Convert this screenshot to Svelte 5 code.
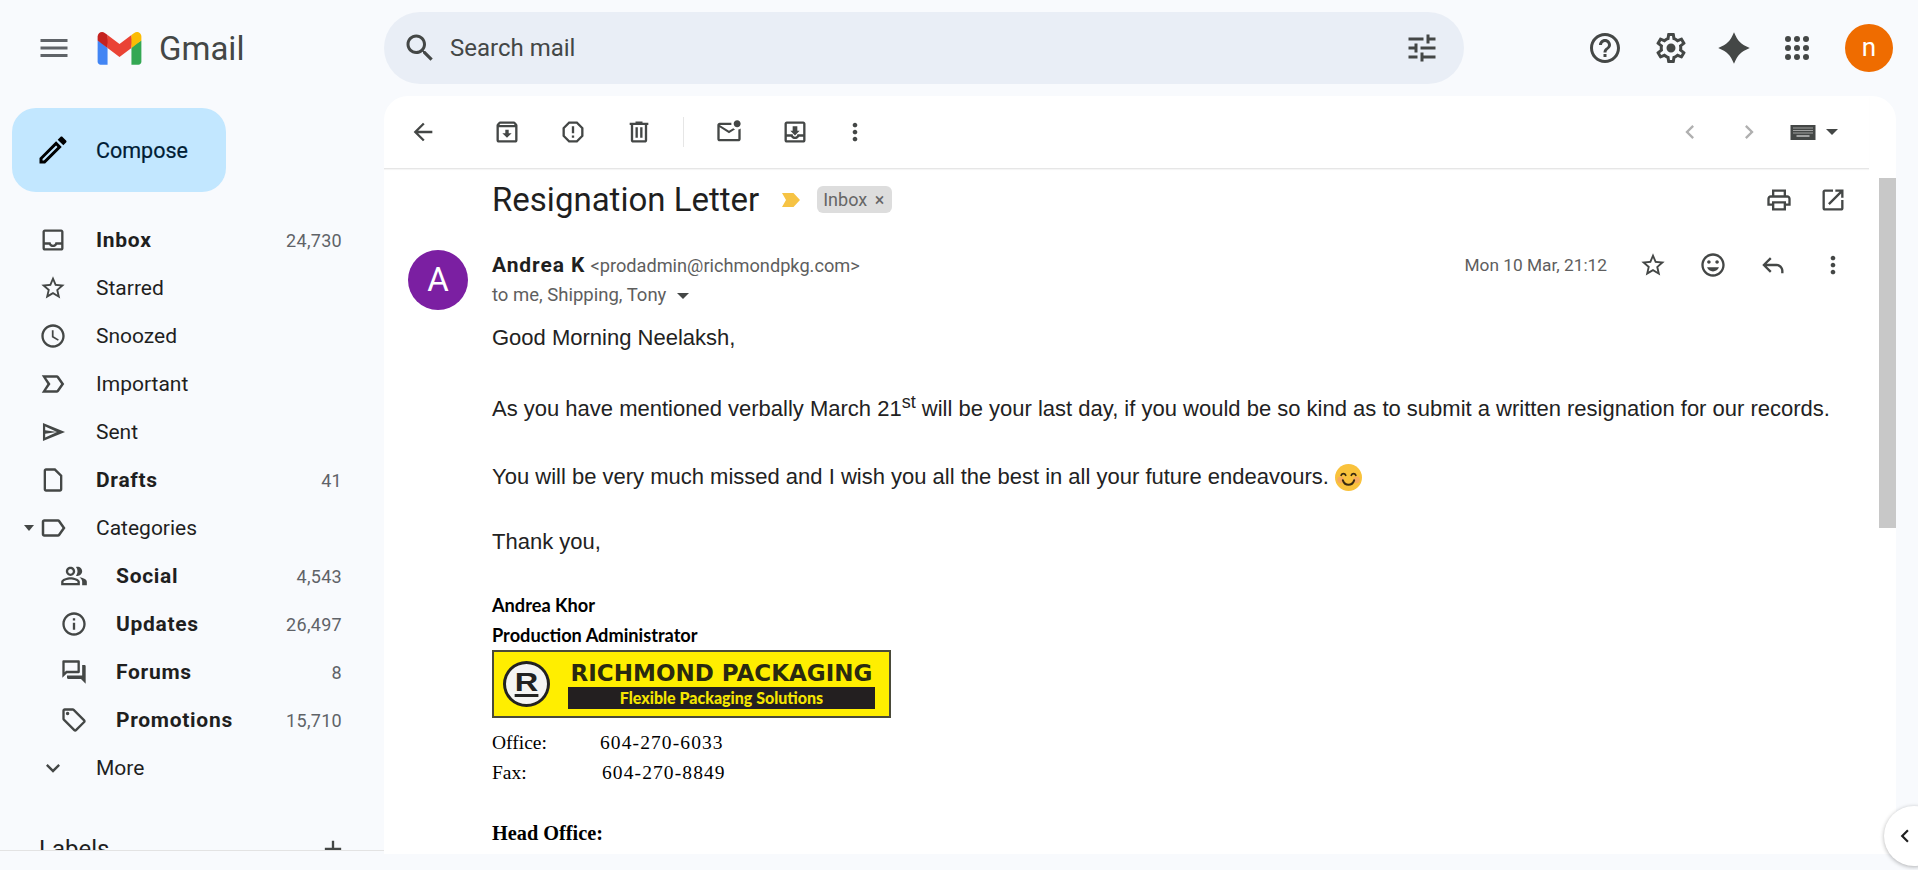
<script>
	const p = {
		menu: 'M3 18h18v-2H3v2zm0-5h18v-2H3v2zm0-7v2h18V6H3z',
		search: 'M15.5 14h-.79l-.28-.27C15.41 12.59 16 11.11 16 9.5 16 5.91 13.09 3 9.5 3S3 5.91 3 9.5 5.91 16 9.5 16c1.61 0 3.09-.59 4.23-1.57l.27.28v.79l5 4.99L20.49 19l-4.99-5zm-6 0C7.01 14 5 11.99 5 9.5S7.01 5 9.5 5 14 7.01 14 9.5 11.99 14 9.5 14z',
		tune: 'M3 17v2h6v-2H3zM3 5v2h10V5H3zm10 16v-2h8v-2h-8v-2h-2v6h2zM7 9v2H3v2h4v2h2V9H7zm14 4v-2H11v2h10zm-6-4h2V7h4V5h-4V3h-2v6z',
		help: 'M11 18h2v-2h-2v2zm1-16C6.48 2 2 6.48 2 12s4.48 10 10 10 10-4.48 10-10S17.52 2 12 2zm0 18c-4.41 0-8-3.59-8-8s3.59-8 8-8 8 3.59 8 8-3.59 8-8 8zm0-14c-2.21 0-4 1.79-4 4h2c0-1.1.9-2 2-2s2 .9 2 2c0 2-3 1.75-3 5h2c0-2.25 3-2.5 3-5 0-2.21-1.79-4-4-4z',
		gear: 'M19.43 12.98c.04-.32.07-.64.07-.98 0-.34-.03-.66-.07-.98l2.11-1.65c.19-.15.24-.42.12-.64l-2-3.46c-.09-.16-.26-.25-.44-.25-.06 0-.12.01-.17.03l-2.49 1c-.52-.4-1.08-.73-1.69-.98l-.38-2.65C14.46 2.18 14.25 2 14 2h-4c-.25 0-.46.18-.49.42l-.38 2.65c-.61.25-1.17.59-1.69.98l-2.49-1c-.06-.02-.12-.03-.18-.03-.17 0-.34.09-.43.25l-2 3.46c-.13.22-.07.49.12.64l2.11 1.65c-.04.32-.07.65-.07.98 0 .33.03.66.07.98l-2.11 1.65c-.19.15-.24.42-.12.64l2 3.46c.09.16.26.25.44.25.06 0 .12-.01.17-.03l2.49-1c.52.4 1.08.73 1.69.98l.38 2.65c.03.24.24.42.49.42h4c.25 0 .46-.18.49-.42l.38-2.65c.61-.25 1.17-.59 1.69-.98l2.49 1c.06.02.12.03.18.03.17 0 .34-.09.43-.25l2-3.46c.12-.22.07-.49-.12-.64l-2.11-1.65zm-1.98-1.71c.04.31.05.52.05.73 0 .21-.02.43-.05.73l-.14 1.13.89.7 1.08.84-.7 1.21-1.27-.51-1.04-.42-.9.68c-.43.32-.84.56-1.25.73l-1.06.43-.16 1.13-.2 1.35h-1.4l-.19-1.35-.16-1.13-1.06-.43c-.43-.18-.83-.41-1.23-.71l-.91-.7-1.06.43-1.27.51-.7-1.21 1.08-.84.89-.7-.14-1.13c-.03-.31-.05-.54-.05-.74s.02-.43.05-.73l.14-1.13-.89-.7-1.08-.84.7-1.21 1.27.51 1.04.42.9-.68c.43-.32.84-.56 1.25-.73l1.06-.43.16-1.13.2-1.35h1.39l.19 1.35.16 1.13 1.06.43c.43.18.83.41 1.23.71l.91.7 1.06-.43 1.27-.51.7 1.21-1.07.85-.89.7.14 1.13zM12 9a3 3 0 1 0 0 6 3 3 0 0 0 0-6z',
		spark: 'M12 1.5C14.5 7.5 16.5 9.5 22.5 12 16.5 14.5 14.5 16.5 12 22.5 9.5 16.5 7.5 14.5 1.5 12 7.5 9.5 9.5 7.5 12 1.5z',
		grid: 'M6 8a2 2 0 1 0 0-4 2 2 0 0 0 0 4zm6 0a2 2 0 1 0 0-4 2 2 0 0 0 0 4zm6 0a2 2 0 1 0 0-4 2 2 0 0 0 0 4zM6 14a2 2 0 1 0 0-4 2 2 0 0 0 0 4zm6 0a2 2 0 1 0 0-4 2 2 0 0 0 0 4zm6 0a2 2 0 1 0 0-4 2 2 0 0 0 0 4zM6 20a2 2 0 1 0 0-4 2 2 0 0 0 0 4zm6 0a2 2 0 1 0 0-4 2 2 0 0 0 0 4zm6 0a2 2 0 1 0 0-4 2 2 0 0 0 0 4z',
		pencil: 'M3 17.25V21h3.75L17.81 9.94l-3.75-3.75L3 17.25zM5.92 19H5v-.92l9.06-9.06.92.92L5.92 19zM20.71 5.63l-2.34-2.34c-.2-.2-.45-.29-.71-.29s-.51.1-.7.29l-1.83 1.83 3.75 3.75 1.83-1.83c.39-.39.39-1.02 0-1.41z',
		inbox: 'M19 3H5c-1.1 0-2 .9-2 2v14c0 1.1.9 2 2 2h14c1.1 0 2-.9 2-2V5c0-1.1-.9-2-2-2zm0 16H5v-3h3.56c.69 1.19 1.97 2 3.45 2s2.75-.81 3.45-2H19v3zm0-5h-4.99c0 1.1-.9 2-2 2s-2-.9-2-2H5V5h14v9z',
		star: 'M22 9.24l-7.19-.62L12 2 9.19 8.63 2 9.24l5.46 4.73L5.82 21 12 17.27 18.18 21l-1.63-7.03L22 9.24zM12 15.4l-3.76 2.27 1-4.28-3.32-2.88 4.38-.38L12 6.1l1.71 4.04 4.38.38-3.32 2.88 1 4.28L12 15.4z',
		clock: 'M11.99 2C6.47 2 2 6.48 2 12s4.47 10 9.99 10C17.52 22 22 17.52 22 12S17.52 2 11.99 2zM12 20c-4.42 0-8-3.58-8-8s3.58-8 8-8 8 3.58 8 8-3.58 8-8 8zm.5-13H11v6l5.25 3.15.75-1.23-4.5-2.67z',
		important: 'M15 19H3l4.5-7L3 5h12c.65 0 1.26.31 1.63.84L21 12l-4.37 6.16c-.37.52-.98.84-1.63.84zm-8.5-2H15l3.5-5L15 7H6.5l3.5 5-3.5 5z',
		sent: 'M3.4 4.3 22.3 12 3.4 19.7zM5.3 7.2v3.3L15.5 12zM5.3 13.5v3.3L15.5 12z',
		draft: 'M14 2H6c-1.1 0-2 .9-2 2v16c0 1.1.9 2 2 2h12c1.1 0 2-.9 2-2V8l-6-6zm4 18H6V4h7.17L18 8.83V20z',
		label: 'M17.63 5.84C17.27 5.33 16.67 5 16 5L5 5.01C3.9 5.01 3 5.9 3 7v10c0 1.1.9 1.99 2 1.99L16 19c.67 0 1.27-.33 1.63-.84L22 12l-4.37-6.16zM16 17H5V7h11l3.55 5L16 17z',
		group: 'M16.67 13.13C18.04 14.06 19 15.32 19 17v3h4v-3c0-2.18-3.57-3.47-6.33-3.87zM9 12c2.21 0 4-1.79 4-4s-1.79-4-4-4-4 1.79-4 4 1.79 4 4 4zm0-6c1.1 0 2 .9 2 2s-.9 2-2 2-2-.9-2-2 .9-2 2-2zm6 6c2.21 0 4-1.79 4-4s-1.79-4-4-4c-.47 0-.91.1-1.33.24C14.5 5.27 15 6.58 15 8s-.5 2.73-1.33 3.76c.42.14.86.24 1.33.24zM9 13c-2.67 0-8 1.34-8 4v3h16v-3c0-2.66-5.33-4-8-4zm6 5H3v-.99C3.2 16.29 6.3 15 9 15s5.8 1.29 6 2v1z',
		info: 'M11 7h2v2h-2zm0 4h2v6h-2zm1-9C6.48 2 2 6.48 2 12s4.48 10 10 10 10-4.48 10-10S17.52 2 12 2zm0 18c-4.41 0-8-3.59-8-8s3.59-8 8-8 8 3.59 8 8-3.59 8-8 8z',
		forum: 'M15 4v7H5.17L4 12.17V4h11m1-2H3c-.55 0-1 .45-1 1v14l4-4h10c.55 0 1-.45 1-1V3c0-.55-.45-1-1-1zm5 4h-2v9H6v2c0 .55.45 1 1 1h11l4 4V7c0-.55-.45-1-1-1z',
		tag: 'M21.41 11.58l-9-9C12.05 2.22 11.55 2 11 2H4c-1.1 0-2 .9-2 2v7c0 .55.22 1.05.59 1.42l9 9c.36.36.86.58 1.41.58s1.05-.22 1.41-.59l7-7c.37-.36.59-.86.59-1.41s-.23-1.06-.59-1.42zM13 20.01L4 11V4h7v-.01l9 9-7 7.02zM6.5 5a1.5 1.5 0 1 0 0 3 1.5 1.5 0 0 0 0-3z',
		more: 'M16.59 8.59L12 13.17 7.41 8.59 6 10l6 6 6-6z',
		plus: 'M19 13h-6v6h-2v-6H5v-2h6V5h2v6h6v2z',
		back: 'M20 11H7.83l5.59-5.59L12 4l-8 8 8 8 1.41-1.41L7.83 13H20v-2z',
		archive: 'M20.54 5.23l-1.39-1.68C18.88 3.21 18.47 3 18 3H6c-.47 0-.88.21-1.16.55L3.46 5.23C3.17 5.57 3 6.02 3 6.5V19c0 1.1.9 2 2 2h14c1.1 0 2-.9 2-2V6.5c0-.48-.17-.93-.46-1.27zM6.24 5h11.52l.81.97H5.44l.8-.97zM5 19V8h14v11H5zm8.45-9h-2.9v3H8l4 4 4-4h-2.55z',
		spam: 'M15.73 3H8.27L3 8.27v7.46L8.27 21h7.46L21 15.73V8.27L15.73 3zM19 14.9L14.9 19H9.1L5 14.9V9.1L9.1 5h5.8L19 9.1v5.8zM11 7h2v6h-2zm0 8h2v2h-2z',
		trash: 'M15 4V3H9v1H4v2h1v13c0 1.1.9 2 2 2h10c1.1 0 2-.9 2-2V6h1V4h-5zm2 15H7V6h10v13zM9 8h2v9H9zm4 0h2v9h-2z',
		unread: 'M22 8.98V18c0 1.1-.9 2-2 2H4c-1.1 0-2-.9-2-2V6c0-1.1.9-2 2-2h10.1c-.06.32-.1.66-.1 1 0 .34.04.68.1 1H4l8 5 3.67-2.29c.47.43 1.02.76 1.63.98L12 13 4 8v10h16V9.9c.74-.15 1.42-.48 2-.92zM16 5c0 1.66 1.34 3 3 3s3-1.34 3-3-1.34-3-3-3-3 1.34-3 3z',
		move: 'M19 3H4.99c-1.11 0-1.98.9-1.98 2L3 19c0 1.1.88 2 1.99 2H19c1.1 0 2-.9 2-2V5c0-1.1-.9-2-2-2zm0 16H5v-3h3.56c.69 1.19 1.97 2 3.45 2s2.75-.81 3.45-2H19v3zm0-5h-4.99c0 1.1-.9 2-2 2s-2-.9-2-2H5V5h14v9zm-3-3h-2V7h-4v4H8l4 4 4-4z',
		dots: 'M12 8c1.1 0 2-.9 2-2s-.9-2-2-2-2 .9-2 2 .9 2 2 2zm0 2c-1.1 0-2 .9-2 2s.9 2 2 2 2-.9 2-2-.9-2-2-2zm0 6c-1.1 0-2 .9-2 2s.9 2 2 2 2-.9 2-2-.9-2-2-2z',
		prev: 'M15.41 7.41L14 6l-6 6 6 6 1.41-1.41L10.83 12z',
		next: 'M10 6L8.59 7.41 13.17 12l-4.58 4.59L10 18l6-6z',
		print: 'M19 8h-1V3H6v5H5c-1.66 0-3 1.34-3 3v6h4v4h12v-4h4v-6c0-1.66-1.34-3-3-3zM8 5h8v3H8V5zm8 12v2H8v-4h8v2zm2-2v-2H6v2H4v-4c0-.55.45-1 1-1h14c.55 0 1 .45 1 1v4h-2z',
		open: 'M19 19H5V5h7V3H5c-1.11 0-2 .9-2 2v14c0 1.1.89 2 2 2h14c1.1 0 2-.9 2-2v-7h-2v7zM14 3v2h3.59l-9.83 9.83 1.41 1.41L19 6.41V10h2V3h-7z',
		smile: 'M11.99 2C6.47 2 2 6.48 2 12s4.47 10 9.99 10C17.52 22 22 17.52 22 12S17.52 2 11.99 2zM12 20c-4.42 0-8-3.58-8-8s3.58-8 8-8 8 3.58 8 8-3.58 8-8 8zm3.5-9c.83 0 1.5-.67 1.5-1.5S16.33 8 15.5 8 14 8.67 14 9.5s.67 1.5 1.5 1.5zm-7 0c.83 0 1.5-.67 1.5-1.5S9.33 8 8.5 8 7 8.67 7 9.5 7.67 11 8.5 11zm3.5 6.5c2.33 0 4.31-1.46 5.11-3.5H6.89c.8 2.04 2.78 3.5 5.11 3.5z',
		reply: 'M9.4 5.4 10.8 6.8 6.6 11H15c3.3 0 6 2.7 6 6v2h-2v-2c0-2.2-1.8-4-4-4H6.6l4.2 4.2-1.4 1.4L2.8 12z'
	};

	const mainNav = [
		{ name: 'Inbox', icon: p.inbox, count: '24,730', bold: true },
		{ name: 'Starred', icon: p.star },
		{ name: 'Snoozed', icon: p.clock },
		{ name: 'Important', icon: p.important, wide: true },
		{ name: 'Sent', icon: p.sent },
		{ name: 'Drafts', icon: p.draft, count: '41', bold: true },
		{ name: 'Categories', icon: p.label, caret: true, wide: true }
	];

	const categories = [
		{ name: 'Social', icon: p.group, count: '4,543' },
		{ name: 'Updates', icon: p.info, count: '26,497' },
		{ name: 'Forums', icon: p.forum, count: '8' },
		{ name: 'Promotions', icon: p.tag, count: '15,710' }
	];
</script>

{#snippet ic(d, cls = '')}
	<svg class={'ic ' + cls} viewBox="0 0 24 24" aria-hidden="true"><path {d} /></svg>
{/snippet}

<div class="app">
	<header class="top">
		<div class="brand">
			<span class="menu">{@render ic(p.menu, 'big soft')}</span>
			<svg class="logo" viewBox="0 0 256 193" aria-hidden="true">
				<path fill="#4285F4" d="M58.182 192.05V93.14L27.507 65.077 0 49.504v125.091c0 9.658 7.825 17.455 17.455 17.455h40.727Z" />
				<path fill="#34A853" d="M197.818 192.05h40.727c9.659 0 17.455-7.826 17.455-17.455V49.505l-31.156 17.837-27.026 25.798v98.91Z" />
				<path fill="#EA4335" d="m58.182 93.14-4.174-38.647 4.174-36.989L128 69.868l69.818-52.364 4.669 34.992-4.669 40.644L128 145.504z" />
				<path fill="#FBBC04" d="M197.818 17.504V93.14L256 49.504V26.231c0-21.585-24.64-33.89-41.89-20.945l-16.292 12.218Z" />
				<path fill="#C5221F" d="m0 49.504 26.759 20.07L58.182 93.14V17.504L41.89 5.286C24.61-7.66 0 4.646 0 26.23v23.273Z" />
			</svg>
			<span class="wordmark">Gmail</span>
		</div>
		<div class="search">
			{@render ic(p.search, 'big')}
			<span class="search-text">Search mail</span>
			{@render ic(p.tune, 'big')}
		</div>
		<div class="top-actions">
			<span class="tbtn help">{@render ic(p.help, 'big')}</span>
			<span class="tbtn">{@render ic(p.gear, 'big')}</span>
			<span class="tbtn">{@render ic(p.spark, 'big')}</span>
			<span class="tbtn">{@render ic(p.grid, 'big')}</span>
			<span class="me">n</span>
		</div>
	</header>

	<div class="columns">
		<aside class="side">
			<button class="compose">
				{@render ic(p.pencil, 'pen')}
				<span>Compose</span>
			</button>
			<nav class="nav">
				{#each mainNav as item}
					<div class="row" class:bold={item.bold}>
						{#if item.caret}<span class="caret"></span>{/if}
						<span class="row-icon">{@render ic(item.icon, item.wide ? 'wide' : '')}</span>
						<span class="row-name">{item.name}</span>
						{#if item.count}<span class="count">{item.count}</span>{/if}
					</div>
				{/each}
				{#each categories as item}
					<div class="row sub bold">
						<span class="row-icon">{@render ic(item.icon)}</span>
						<span class="row-name">{item.name}</span>
						<span class="count">{item.count}</span>
					</div>
				{/each}
				<div class="row">
					<span class="row-icon">{@render ic(p.more)}</span>
					<span class="row-name">More</span>
				</div>
			</nav>
			<div class="labels">
				<span>Labels</span>
				{@render ic(p.plus)}
			</div>
		</aside>

		<main class="panel">
			<div class="toolbar">
				<span class="tool back">{@render ic(p.back)}</span>
				<span class="tool">{@render ic(p.archive)}</span>
				<span class="tool">{@render ic(p.spam)}</span>
				<span class="tool">{@render ic(p.trash)}</span>
				<span class="divider"></span>
				<span class="tool">{@render ic(p.unread)}</span>
				<span class="tool">{@render ic(p.move)}</span>
				<span class="tool narrow">{@render ic(p.dots)}</span>
				<span class="pager">
					<span class="tool page">{@render ic(p.prev, 'faint')}</span>
					<span class="tool page">{@render ic(p.next, 'faint')}</span>
					<svg class="keyboard" viewBox="0 0 25 15" aria-hidden="true">
						<rect width="25" height="15" fill="#444746" />
						<path d="M3 3h19M3 5.5h19M3 8h19" stroke="#fff" stroke-width="1" stroke-dasharray="1 1" />
						<path d="M6 11h13" stroke="#fff" stroke-width="1" />
					</svg>
					<span class="kb-caret"></span>
				</span>
			</div>

			<div class="scroll">
				<div class="subject-row">
					<h1>Resignation Letter</h1>
					<svg class="marker" viewBox="0 0 18 14" aria-hidden="true"><path fill="#f6c344" d="M0 0h11.5l6.5 7-6.5 7H0l4-7z" /></svg>
					<span class="chip">Inbox <span class="chip-x">×</span></span>
					<span class="subject-tools">
						<span class="mini-left">{@render ic(p.print)}</span>
						<span class="mini">{@render ic(p.open)}</span>
					</span>
				</div>

				<article class="message">
					<div class="avatar">A</div>
					<div class="content">
						<div class="head">
							<div>
								<div class="from"><b>Andrea K</b> <span>&lt;prodadmin@richmondpkg.com&gt;</span></div>
								<div class="to">to me, Shipping, Tony <span class="to-caret"></span></div>
							</div>
							<div class="head-right">
								<span class="date">Mon 10 Mar, 21:12</span>
								<span class="act">{@render ic(p.star)}</span>
								<span class="act">{@render ic(p.smile)}</span>
								<span class="act">{@render ic(p.reply)}</span>
								<span class="act">{@render ic(p.dots)}</span>
							</div>
						</div>

						<div class="body">
							<p>Good Morning Neelaksh,</p>
							<p>As you have mentioned verbally March 21<sup>st</sup> will be your last day, if you would be so kind as to submit a written resignation for our records.</p>
							<p class="with-emoji">You will be very much missed and I wish you all the best in all your future endeavours.
								<svg class="emoji" viewBox="0 0 24 24" aria-hidden="true">
									<circle cx="12" cy="12" r="12" fill="#f9c23c" />
									<circle cx="5" cy="14" r="3" fill="#f6a06a" opacity=".7" />
									<circle cx="19" cy="14" r="3" fill="#f6a06a" opacity=".7" />
									<path d="M5.5 10c.8-2 3.2-2 4 0M14.5 10c.8-2 3.2-2 4 0" fill="none" stroke="#3a2a10" stroke-width="1.6" stroke-linecap="round" />
									<path d="M7 14.500c1 2.800 2.700 4 5 4s4-1.200 5-4" fill="none" stroke="#3a2a10" stroke-width="1.8" stroke-linecap="round" />
								</svg>
							</p>
							<p>Thank you,</p>
						</div>

						<div class="signature">
							<div class="sig-name">Andrea Khor</div>
							<div class="sig-name">Production Administrator</div>
							<div class="banner">
								<div class="seal"><span>R</span></div>
								<div class="banner-text">
									<div class="company">RICHMOND PACKAGING</div>
									<div class="tagline">Flexible Packaging Solutions</div>
								</div>
							</div>
							<div class="phones">
								<div class="phone"><span class="phone-label">Office:</span><span class="num">604-270-6033</span></div>
								<div class="phone"><span class="phone-label fax">Fax:</span><span class="num">604-270-8849</span></div>
							</div>
							<div class="head-office">Head Office:</div>
						</div>
					</div>
				</article>

				<div class="thumb"></div>
			</div>
		</main>
	</div>

	<div class="fab">
		<svg viewBox="0 0 24 24" aria-hidden="true"><path d={p.prev} /></svg>
	</div>
</div>

<style>
	:global(body) {
		background: #f8fafd;
		overflow: hidden;
	}

	.app {
		position: relative;
		height: 870px;
		overflow: hidden;
		font-family: Roboto, 'Liberation Sans', sans-serif;
		color: #1f1f1f;
	}

	.ic {
		display: block;
		width: 28px;
		height: 28px;
		fill: #444746;
		flex: none;
	}

	.ic.big {
		width: 36px;
		height: 36px;
	}

	.ic.soft {
		fill: #5f6368;
	}

	.ic.wide {
		width: 30px;
		height: 30px;
		margin-left: -1px;
	}

	.ic.faint {
		fill: #b0b0b0;
	}

	/* top bar */
	.top {
		display: flex;
		align-items: center;
		height: 96px;
	}

	.brand {
		display: flex;
		align-items: center;
		width: 384px;
		flex: none;
		padding-left: 36px;
		box-sizing: border-box;
	}

	.logo {
		width: 45px;
		height: 33px;
		margin-left: 25px;
	}

	.wordmark {
		margin-left: 17px;
		font-size: 33px;
		color: #444746;
	}

	.search {
		display: flex;
		align-items: center;
		width: 1080px;
		height: 72px;
		padding: 0 24px 0 18px;
		box-sizing: border-box;
		background: #e9eef6;
		border-radius: 36px;
	}

	.search-text {
		flex: 1;
		margin-left: 12px;
		font-size: 24px;
		color: #444746;
	}

	.top-actions {
		display: flex;
		align-items: center;
		margin-left: 109.5px;
	}

	.tbtn {
		display: flex;
		justify-content: center;
		width: 63px;
	}

	.tbtn.help {
		margin-right: 3px;
	}

	.me {
		width: 48px;
		height: 48px;
		margin-left: 16.5px;
		border-radius: 50%;
		background: #ef6c00;
		color: #fff;
		font-size: 26px;
		line-height: 46px;
		text-align: center;
	}

	/* columns */
	.columns {
		display: flex;
		align-items: flex-start;
	}

	.side {
		position: relative;
		width: 384px;
		height: 754px;
		flex: none;
		overflow: hidden;
		border-bottom: 1px solid #e3e3e3;
	}

	.compose {
		display: flex;
		align-items: center;
		width: 214px;
		height: 84px;
		margin: 12px 0 0 12px;
		padding: 0 0 0 23px;
		box-sizing: border-box;
		border: none;
		border-radius: 24px;
		background: #c2e7ff;
		color: #001d35;
		font-family: inherit;
		font-size: 21.5px;
		font-weight: 400;
		-webkit-text-stroke: 0.2px #001d35;
	}

	.compose span {
		margin-left: 25px;
	}

	.ic.pen {
		width: 36px;
		height: 36px;
		fill: #000;
	}

	.nav {
		margin-top: 24px;
	}

	.row {
		display: flex;
		align-items: center;
		position: relative;
		height: 48px;
		padding: 0 42px 0 39px;
		font-size: 21px;
		color: #1f1f1f;
	}

	.row.sub {
		padding-left: 60px;
	}

	.row.bold .row-name {
		font-weight: 700;
		letter-spacing: 0.7px;
	}

	.row-icon {
		width: 57px;
		flex: none;
	}

	.row.sub .row-icon {
		width: 56px;
	}

	.row-name {
		flex: 1;
	}

	.count {
		font-size: 18px;
		letter-spacing: 0.3px;
		color: #5f6368;
	}

	.caret {
		position: absolute;
		left: 24px;
		top: 21px;
		border: 5.5px solid transparent;
		border-top: 6px solid #444746;
		border-bottom: none;
	}

	.labels {
		display: flex;
		justify-content: space-between;
		align-items: center;
		margin-top: 43px;
		padding: 0 37px 0 39px;
		font-size: 24px;
	}

	/* message panel */
	.panel {
		width: 1512px;
		height: 758px;
		overflow: hidden;
		background: #fff;
		border-radius: 24px 24px 0 0;
	}

	.toolbar {
		display: flex;
		align-items: center;
		width: 1485px;
		height: 73px;
		padding-left: 6px;
		box-sizing: border-box;
		border-bottom: 1px solid #e6e6e6;
		box-shadow: 0 1px 1px rgba(0, 0, 0, 0.04);
	}

	.tool {
		display: flex;
		justify-content: center;
		width: 66px;
	}

	.tool.back {
		margin-right: 18px;
	}

	.tool.narrow {
		width: 54px;
	}

	.divider {
		width: 1px;
		height: 30px;
		margin: 0 12px 0 11px;
		background: #e6e6e6;
	}

	.pager {
		display: flex;
		align-items: center;
		margin-left: auto;
		padding-right: 31px;
	}

	.tool.page {
		width: 59px;
	}

	.keyboard {
		width: 26px;
		height: 15px;
		margin-left: 11.5px;
	}

	.kb-caret {
		margin-left: 10px;
		border: 6px solid transparent;
		border-top: 6px solid #444746;
		border-bottom: none;
	}

	.scroll {
		position: relative;
		height: 685px;
		overflow: hidden;
	}

	.thumb {
		position: absolute;
		top: 9px;
		right: 0;
		width: 17px;
		height: 350px;
		background: #c8c8c8;
	}

	.subject-row {
		display: flex;
		align-items: center;
		height: 61px;
		padding: 0 34px 0 108px;
	}

	h1 {
		margin: 0;
		font-size: 33px;
		font-weight: 400;
		color: #1f1f1f;
	}

	.marker {
		width: 18px;
		height: 14px;
		margin-left: 23px;
	}

	.chip {
		margin-left: 17px;
		padding: 0 8px 0 6px;
		height: 27px;
		line-height: 27px;
		border-radius: 6px;
		background: #dddddd;
		color: #666;
		font-size: 18px;
	}

	.chip-x {
		margin-left: 3px;
	}

	.subject-tools {
		display: flex;
		margin-left: auto;
	}

	.mini-left {
		display: flex;
		justify-content: center;
		width: 50px;
	}

	.mini {
		display: flex;
		justify-content: center;
		width: 58px;
	}

	.message {
		display: flex;
		padding: 20px 33px 0 24px;
	}

	.avatar {
		width: 60px;
		height: 60px;
		flex: none;
		border-radius: 50%;
		background: #7b1fa2;
		color: #fff;
		font-size: 33px;
		line-height: 60px;
		text-align: center;
	}

	.content {
		flex: 1;
		margin-left: 24px;
	}

	.head {
		display: flex;
		justify-content: space-between;
		height: 72px;
	}

	.from {
		height: 30px;
		line-height: 30px;
		font-size: 21px;
	}

	.from b {
		font-weight: 700;
		letter-spacing: 0.9px;
	}

	.from span {
		font-size: 18.2px;
		color: #5e5e5e;
	}

	.to {
		height: 30px;
		line-height: 30px;
		font-size: 18.5px;
		color: #5e5e5e;
	}

	.to-caret {
		display: inline-block;
		margin-left: 6px;
		vertical-align: 2px;
		border: 6px solid transparent;
		border-top: 6px solid #444746;
		border-bottom: none;
	}

	.head-right {
		display: flex;
		align-items: center;
		height: 30px;
	}

	.date {
		margin-right: 16px;
		font-size: 17.3px;
		color: #5e5e5e;
	}

	.act {
		display: flex;
		justify-content: center;
		width: 60px;
	}

	.body {
		font-family: 'Liberation Sans', Arial, sans-serif;
		font-size: 22px;
		line-height: 32.5px;
		color: #222;
	}

	.body p {
		margin: 0 0 32.5px;
	}

	.body p.with-emoji {
		padding-top: 3px;
	}

	.body sup {
		font-size: 18px;
		line-height: 30px;
	}

	.emoji {
		width: 27px;
		height: 27px;
		vertical-align: -7px;
	}

	.signature {
		margin-top: -1px;
		color: #000;
	}

	.sig-name {
		height: 30px;
		line-height: 30px;
		font-family: Lato, 'Liberation Sans', sans-serif;
		font-size: 18.2px;
		font-weight: 700;
	}

	.banner {
		display: flex;
		align-items: center;
		width: 399px;
		height: 68px;
		box-sizing: border-box;
		padding: 0 14px 0 9px;
		background: #ffee00;
		border: 2px solid #4a4a3a;
	}

	.seal {
		display: flex;
		align-items: center;
		justify-content: center;
		width: 47px;
		height: 46px;
		flex: none;
		box-sizing: border-box;
		border: 3px solid #222;
		border-radius: 50%;
		background: #f4f4f4;
	}

	.seal span {
		font-family: 'Liberation Sans', sans-serif;
		font-weight: 700;
		font-size: 26px;
		line-height: 23px;
		border-bottom: 3px solid #222;
		color: #222;
		transform: scaleX(1.25);
	}

	.banner-text {
		flex: 1;
		margin-left: 18px;
	}

	.company {
		font-family: 'DejaVu Sans', sans-serif;
		font-weight: 700;
		font-size: 23px;
		line-height: 27px;
		white-space: nowrap;
		text-align: center;
		color: #2a2a10;
	}

	.tagline {
		height: 22px;
		background: #231f20;
		color: #f5e500;
		font-family: Lato, sans-serif;
		font-weight: 900;
		font-size: 16px;
		line-height: 22px;
		text-align: center;
	}

	.phones {
		margin-top: 10px;
	}

	.phone {
		height: 30px;
		line-height: 30px;
		font-family: 'Liberation Serif', serif;
		font-size: 19.5px;
	}

	.num {
		letter-spacing: 1.1px;
	}

	.phone-label {
		display: inline-block;
		width: 108px;
	}

	.phone-label.fax {
		width: 110px;
	}

	.head-office {
		margin-top: 30px;
		font-family: 'Liberation Serif', serif;
		font-weight: 700;
		font-size: 20.3px;
		line-height: 30px;
	}

	.fab {
		position: absolute;
		left: 1884px;
		top: 806px;
		display: flex;
		align-items: center;
		width: 60px;
		height: 60px;
		padding-left: 8px;
		box-sizing: border-box;
		border-radius: 50%;
		background: #fff;
		box-shadow: 0 1px 4px rgba(0, 0, 0, 0.3);
	}

	.fab svg {
		width: 26px;
		height: 26px;
		fill: #1f1f1f;
	}
</style>
